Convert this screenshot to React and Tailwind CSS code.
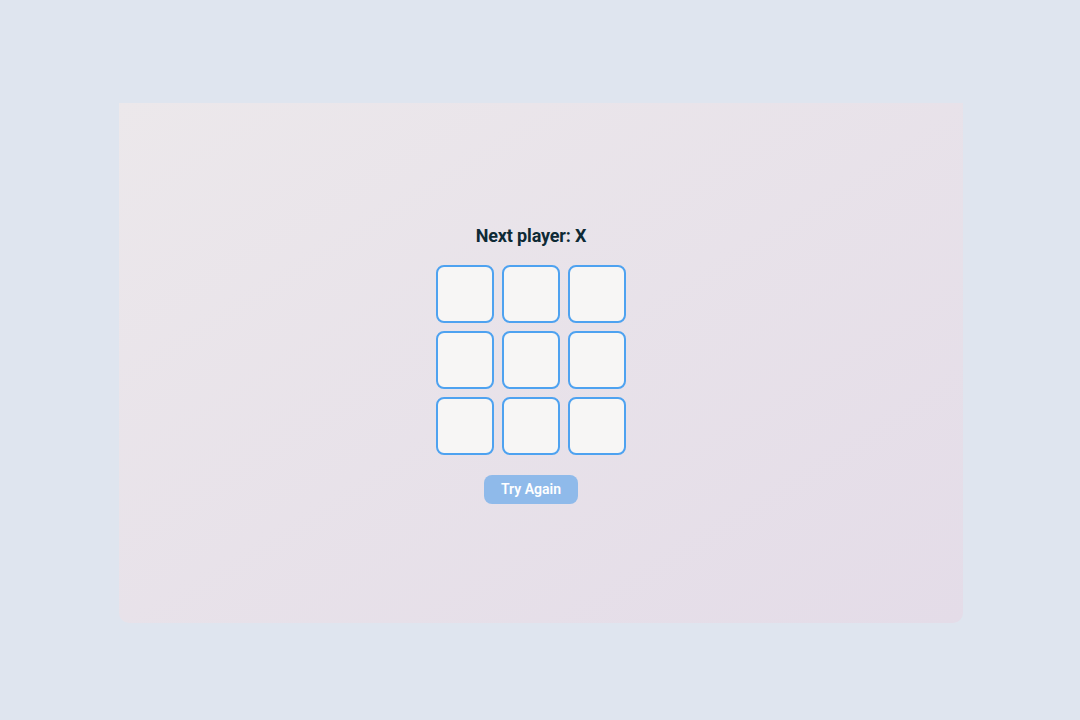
export default function App() {
  const cells = Array.from({ length: 9 });
  return (
    <div className="w-[1080px] h-[720px] bg-[#dfe5ef] pt-[103px] pl-[119px]" style={{ fontFamily: "Roboto, 'Liberation Sans', sans-serif" }}>
      <div className="w-[844px] h-[520px] rounded-b-[10px] bg-gradient-to-br from-[#ece8eb] to-[#e4dce8] flex flex-col items-center justify-center pr-[20px]">
        <div className="text-[18px] leading-[28px] font-bold tracking-[-0.15px] text-[#0e2a35]">Next player: X</div>
        <div className="grid grid-cols-[58px_58px_58px] gap-[8px] mt-[15px]">
          {cells.map((_, i) => (
            <button key={i} className="w-[58px] h-[58px] rounded-[8px] border-2 border-[#4ea2f0] bg-[#f7f6f5]"></button>
          ))}
        </div>
        <button className="mt-[20px] w-[94px] h-[29px] rounded-[8px] bg-[#8fbaea] text-white text-[14px] font-semibold">Try Again</button>
      </div>
    </div>
  );
}
